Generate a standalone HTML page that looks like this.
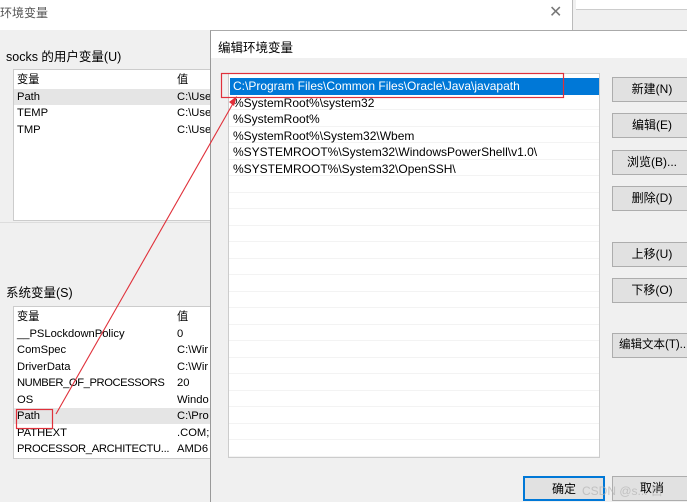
<!DOCTYPE html><html><head><meta charset="utf-8"><style>
*{margin:0;padding:0;box-sizing:border-box}
body{width:687px;height:500px;overflow:hidden;background:#f0f0f0;position:relative;font-family:"Liberation Sans","Noto Sans CJK SC",sans-serif;font-size:12px;color:#000}
.a{position:absolute;white-space:nowrap}
.t{line-height:16.5px}
.btn{position:absolute;background:#e1e1e1;border:1px solid #adadad;text-align:center;line-height:23px;height:25px;font-size:12px;white-space:nowrap;overflow:hidden}
.row{position:absolute;left:0;right:0;height:16.5px;border-bottom:1px solid #f3f3f3}
.sm{font-size:11.2px}
</style></head><body>
<div class="a" style="left:0;top:0;width:573px;height:30px;background:#fff;border-right:1px solid #bbb"></div>
<div class="a" style="left:0;top:4px;font-size:12px;color:#555">环境变量</div>
<div class="a" style="left:549px;top:2px;font-size:16px;color:#777">✕</div>
<div class="a" style="left:576px;top:0;width:111px;height:10px;background:#fff;border-bottom:1px solid #ccc"></div>
<div class="a" style="left:6px;top:46px;font-size:12.5px">socks 的用户变量(U)</div>
<div class="a" style="left:13px;top:69px;width:200px;height:152px;background:#fff;border:1px solid #ccc"></div>
<div class="a" style="left:14px;top:89px;width:198px;height:16px;background:#e5e5e5"></div>
<div class="a t sm" style="left:17px;top:72px">变量<br>Path<br>TEMP<br>TMP</div>
<div class="a t sm" style="left:177px;top:72px">值<br>C:\Use<br>C:\Use<br>C:\Use</div>
<div class="a" style="left:0;top:222px;width:211px;height:1px;background:#ddd"></div>
<div class="a" style="left:6px;top:282px;font-size:12.5px">系统变量(S)</div>
<div class="a" style="left:13px;top:306px;width:200px;height:153px;background:#fff;border:1px solid #ccc;overflow:hidden"></div>
<div class="a" style="left:14px;top:408px;width:198px;height:16px;background:#e5e5e5"></div>
<div class="a t sm" style="left:17px;top:309px">变量<br>__PSLockdownPolicy<br>ComSpec<br>DriverData<br><span style="letter-spacing:-0.4px">NUMBER_OF_PROCESSORS</span><br>OS<br>Path<br>PATHEXT<br><span style="letter-spacing:-0.3px">PROCESSOR_ARCHITECTU...</span></div>
<div class="a t sm" style="left:177px;top:309px">值<br>0<br>C:\Wir<br>C:\Wir<br>20<br>Windo<br>C:\Pro<br>.COM;<br>AMD6</div>

<div class="a" style="left:210px;top:30px;width:480px;height:472px;background:#f0f0f0;border-left:1px solid #999;border-top:1px solid #aaa"></div>
<div class="a" style="left:211px;top:31px;width:476px;height:27px;background:#fff"></div>
<div class="a" style="left:218px;top:37px;font-size:12.5px">编辑环境变量</div>
<div class="a" style="left:228px;top:73px;width:372px;height:385px;background:#fff;border:1px solid #ccc;overflow:hidden">
<div class="row" style="top:3px"></div><div class="row" style="top:19.5px"></div><div class="row" style="top:36px"></div><div class="row" style="top:52.5px"></div><div class="row" style="top:69px"></div><div class="row" style="top:85.5px"></div><div class="row" style="top:102px"></div><div class="row" style="top:118.5px"></div><div class="row" style="top:135px"></div><div class="row" style="top:151.5px"></div><div class="row" style="top:168px"></div><div class="row" style="top:184.5px"></div><div class="row" style="top:201px"></div><div class="row" style="top:217.5px"></div><div class="row" style="top:234px"></div><div class="row" style="top:250.5px"></div><div class="row" style="top:267px"></div><div class="row" style="top:283.5px"></div><div class="row" style="top:300px"></div><div class="row" style="top:316.5px"></div><div class="row" style="top:333px"></div><div class="row" style="top:349.5px"></div><div class="row" style="top:366px"></div>
<div class="a" style="left:1px;top:4px;width:369px;height:17px;background:#0078d7"></div>
<div class="a t" style="left:4px;top:4px;color:#fff">C:\Program Files\Common Files\Oracle\Java\javapath</div>
<div class="a t" style="left:4px;top:20.5px">%SystemRoot%\system32<br>%SystemRoot%<br>%SystemRoot%\System32\Wbem<br>%SYSTEMROOT%\System32\WindowsPowerShell\v1.0\<br>%SYSTEMROOT%\System32\OpenSSH\</div>
</div>
<div class="btn" style="left:612px;top:77px;width:80px">新建(N)</div>
<div class="btn" style="left:612px;top:113px;width:80px">编辑(E)</div>
<div class="btn" style="left:612px;top:150px;width:80px">浏览(B)...</div>
<div class="btn" style="left:612px;top:186px;width:80px">删除(D)</div>
<div class="btn" style="left:612px;top:242px;width:80px">上移(U)</div>
<div class="btn" style="left:612px;top:278px;width:80px">下移(O)</div>
<div class="btn" style="left:612px;top:333px;width:80px;text-align:left;padding-left:6px;font-size:11.5px">编辑文本(T)...</div>
<div class="btn" style="left:523px;top:476px;width:82px;border:2px solid #0078d7;line-height:22px">确定</div>
<div class="btn" style="left:612px;top:476px;width:80px">取消</div>
<div class="a" style="left:582px;top:482px;color:rgba(180,180,180,.7);font-size:12px">CSDN @s... 白</div>

<svg class="a" style="left:0;top:0" width="687" height="500">
<rect x="221.5" y="73.5" width="342" height="24" fill="none" stroke="#e0303a" stroke-width="1.2"/>
<rect x="16.5" y="409.5" width="36" height="19" fill="none" stroke="#e0303a" stroke-width="1.2"/>
<line x1="56" y1="414" x2="235" y2="100" stroke="#e0303a" stroke-width="1.1"/>
<polygon points="237,96 234,106 229,102" fill="#e0303a"/>
</svg>
</body></html>
